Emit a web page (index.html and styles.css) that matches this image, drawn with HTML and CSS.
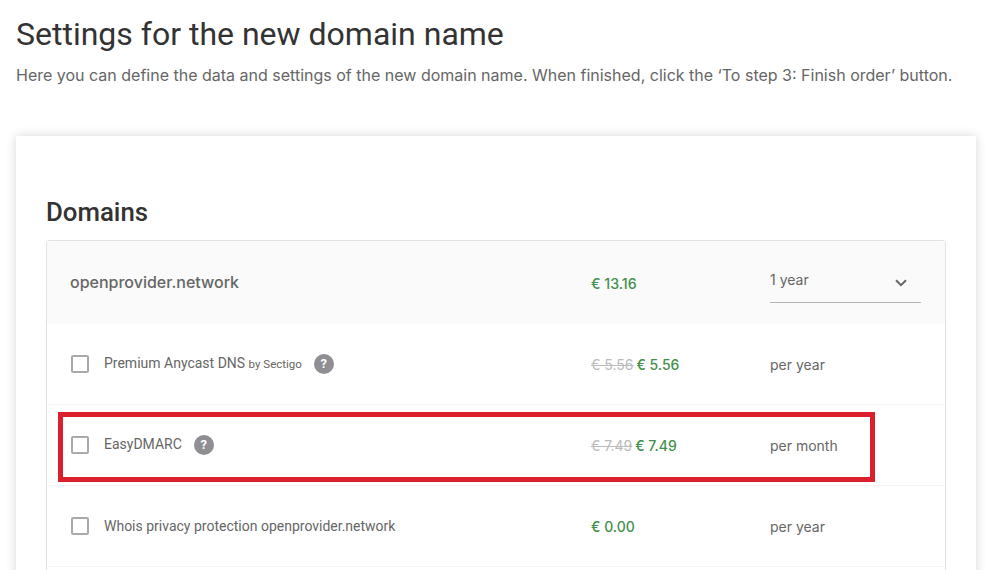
FILE: index.html
```html
<!DOCTYPE html>
<html lang="en">
<head>
<meta charset="utf-8">
<title>Settings for the new domain name</title>
<link rel="stylesheet" href="styles.css">
</head>
<body>
<main class="page">
  <h1 class="title">Settings for the new domain name</h1>
  <p class="intro">Here you can define the data and settings of the new domain name. When finished, click the ‘To step 3: Finish order’ button.</p>
  <section class="card">
    <h2 class="section-title">Domains</h2>
    <div class="table">
      <div class="row head">
        <div class="name domain">openprovider.network</div>
        <div class="price"><span class="now total">€ 13.16</span></div>
        <div class="period select">
          <span>1 year</span>
          <svg class="chevron" width="12" height="8" viewBox="0 0 12 8"><path d="M1 1.2l5 5 5-5" fill="none" stroke="#666" stroke-width="2"/></svg>
        </div>
      </div>
      <div class="row">
        <div class="name"><span class="box"></span><span class="label">Premium Anycast DNS <span class="by">by Sectigo</span></span><span class="help">?</span></div>
        <div class="price"><s class="old">€ 5.56</s> <span class="now">€ 5.56</span></div>
        <div class="period">per year</div>
      </div>
      <div class="row">
        <div class="name"><span class="box"></span><span class="label">EasyDMARC</span><span class="help">?</span></div>
        <div class="price"><s class="old">€ 7.49</s> <span class="now">€ 7.49</span></div>
        <div class="period">per month</div>
      </div>
      <div class="row">
        <div class="name"><span class="box"></span><span class="label plain">Whois privacy protection openprovider.network</span></div>
        <div class="price"><span class="now">€ 0.00</span></div>
        <div class="period">per year</div>
      </div>
      <div class="row"></div>
    </div>
  </section>
</main>
<div class="highlight"></div>
</body>
</html>
```
FILE: styles.css
```css
html, body { margin: 0; height: 570px; overflow: hidden; background: #fff; }
body { font-family: Inter, "Liberation Sans", sans-serif; color: #666; position: relative; }
.page { padding: 14px 19px 0 16px; }
.title { margin: 0; font: 400 32px/40px Roboto, sans-serif; color: #333; }
.intro { margin: 9px 0 0; font-size: 16px; line-height: 24px; color: #666; white-space: nowrap; }
.card { margin-top: 49px; padding: 60px 30px 0; background: #fff; box-shadow: 0 0 10px rgba(0,0,0,.16); height: 500px; }
.section-title { margin: 0 0 12px; font: 500 25.8px/32px Roboto, sans-serif; color: #333; }
.table { border: 1px solid #e2e2e2; border-radius: 3px; }
.row { display: grid; grid-template-columns: 521px 179px 151px; height: 80px; padding: 0 24px 0 23px; align-items: center; border-bottom: 1px solid #f3f3f3; }
.row.head { background: #fafafa; height: 82px; padding-top: 1px; border-bottom: 0; }
.name { display: flex; align-items: center; font: 400 14px/20px Roboto, sans-serif; color: #666; }
.domain { font: 500 16px/24px Inter, sans-serif; position: relative; top: -1px; }
.box { box-sizing: border-box; width: 18px; height: 18px; margin: 0 15px 0 1px; border: 2px solid #aaa; border-radius: 2px; background: #fff; }
.label { position: relative; top: -1px; }
.label.plain { top: 0; }
.by { font-size: 11.5px; }
.help { width: 20px; height: 20px; margin-left: 12px; border-radius: 50%; background: #8e8e93; color: #fff; font: 700 13px/20px Roboto, sans-serif; text-align: center; }
.price { font-size: 14px; white-space: nowrap; }
.old { color: #bbb; margin-right: -1px; }
.now { color: #43904a; font-weight: 500; }
.now.total { font-size: 14.2px; }
.period { font-size: 14px; color: #666; }
.select { display: flex; justify-content: space-between; align-items: center; height: 41px; margin-bottom: 2px; padding: 0 14px 0 0; border-bottom: 1px solid #b5b5b5; font-size: 14px; }
.select span { position: relative; top: -2px; }
.chevron { margin-top: 3px; }
.highlight { position: absolute; left: 58px; top: 412px; width: 807px; height: 60px; border: 5px solid #dc1f2c; }
```
